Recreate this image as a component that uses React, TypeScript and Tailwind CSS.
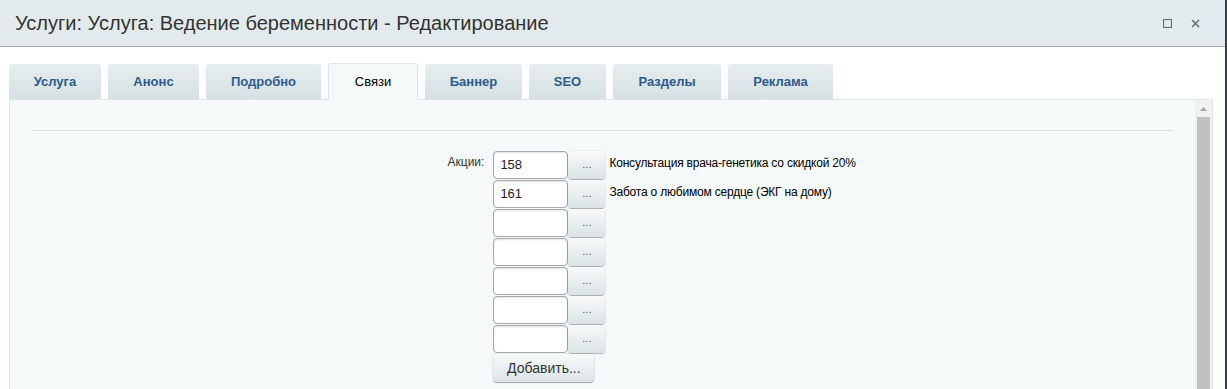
import React from "react";

const tabs = [
  { label: "Услуга", w: "w-[92px]" },
  { label: "Анонс", w: "w-[91px]" },
  { label: "Подробно", w: "w-[115px]" },
  { label: "Связи", w: "w-[90px]", active: true },
  { label: "Баннер", w: "w-[97px]" },
  { label: "SEO", w: "w-[77px]" },
  { label: "Разделы", w: "w-[108px]" },
  { label: "Реклама", w: "w-[105px]" },
];

const rows = [
  { id: "158", name: "Консультация врача-генетика со скидкой 20%" },
  { id: "161", name: "Забота о любимом сердце (ЭКГ на дому)" },
  { id: "", name: "" },
  { id: "", name: "" },
  { id: "", name: "" },
  { id: "", name: "" },
  { id: "", name: "" },
];

export default function App() {
  return (
    <div className="flex h-[389px] w-[1227px] overflow-hidden bg-white font-['Liberation_Sans',Arial,sans-serif]">
      <div className="flex min-w-0 flex-1 flex-col">
        {/* Window header */}
        <div className="flex h-[47px] shrink-0 items-center justify-between border-b border-[#a9b0b3] bg-[#e3eaed] pl-[15px] pr-[25px]">
          <h1 className="text-[20px] font-normal text-[#333]">
            Услуги: Услуга: Ведение беременности - Редактирование
          </h1>
          <div className="flex items-center gap-[19px] text-[#5f6e7a]">
            <svg width="9" height="9" viewBox="0 0 9 9">
              <rect x="0.5" y="0.5" width="8" height="8" fill="none" stroke="currentColor" strokeWidth="1.2" />
            </svg>
            <svg width="9" height="9" viewBox="0 0 9 9">
              <path d="M1 1 L8 8 M8 1 L1 8" stroke="currentColor" strokeWidth="1.5" />
            </svg>
          </div>
        </div>

        {/* Body */}
        <div className="flex min-h-0 flex-1 flex-col pl-[9px] pr-[12px] pt-[16px]">
          {/* Tabs */}
          <div className="flex items-end gap-[7px]">
            {tabs.map((t) =>
              t.active ? (
                <div
                  key={t.label}
                  className={`${t.w} relative z-10 -mb-px flex h-[37px] items-center justify-center rounded-t-[3px] border border-b-0 border-[#dce7ed] bg-[#f5f9f9] pb-[1px] text-[13px] text-black`}
                >
                  {t.label}
                </div>
              ) : (
                <div
                  key={t.label}
                  className={`${t.w} flex h-[35px] items-center justify-center rounded-t-[3px] bg-gradient-to-b from-[#e6edef] to-[#d6e0e3] text-[13px] font-bold text-[#2c5b8e]`}
                >
                  {t.label}
                </div>
              )
            )}
          </div>

          {/* Panel */}
          <div className="flex min-h-0 flex-1 border border-b-0 border-[#dce7ed] bg-[#f5f9f9]">
            <div className="flex-1 pl-[22px] pr-[22px] pt-[30px]">
              <div className="h-px bg-[#dcdfe0]" />
              <div className="mt-[20px] grid grid-cols-[40%_60%] text-[12px]">
                <div className="pr-[4px] pt-[2px] text-right text-[#333]">Акции:</div>
                <div className="flex flex-col gap-px pl-[5px]">
                  {rows.map((r, i) => (
                    <div key={i} className="flex items-start">
                      <div className="flex h-[28px] w-[75px] items-center rounded-[4px] border border-[#a3a9ad] bg-white pl-[6px] text-[13px] text-[#222] shadow-[inset_0_1px_2px_rgba(0,0,0,0.12)]">
                        {r.id}
                      </div>
                      <div className="flex h-[28px] w-[37px] items-center justify-center rounded-[4px] bg-gradient-to-b from-[#f8fafa] to-[#dbe3e6] pb-[2px] text-[11px] text-[#555] shadow-[0_1px_1px_rgba(0,0,0,0.25),0_0_0_1px_rgba(0,0,0,0.04)]">
                        ...
                      </div>
                      <div className="pl-[4px] pt-[3px] text-[12px] tracking-[-0.2px] text-black">{r.name}</div>
                    </div>
                  ))}
                  <div>
                    <button className="flex h-[28px] w-[101px] items-center justify-center rounded-[4px] bg-gradient-to-b from-[#f8fafa] to-[#dbe3e6] text-[14px] text-[#333] shadow-[0_1px_1px_rgba(0,0,0,0.3),0_0_0_1px_rgba(0,0,0,0.05)]">
                      Добавить...
                    </button>
                  </div>
                </div>
              </div>
            </div>

            {/* Scrollbar */}
            <div className="flex w-[17px] shrink-0 flex-col items-center bg-[#f1f1f1]">
              <div className="flex h-[17px] items-center justify-center">
                <svg width="7" height="4" viewBox="0 0 7 4">
                  <path d="M3.5 0 L7 4 L0 4 Z" fill="#a3a3a3" />
                </svg>
              </div>
              <div className="w-[13px] flex-1 bg-[#c1c1c1]" />
            </div>
          </div>
        </div>
      </div>
      <div className="w-[2px] shrink-0 bg-[#323f4b]" />
    </div>
  );
}
